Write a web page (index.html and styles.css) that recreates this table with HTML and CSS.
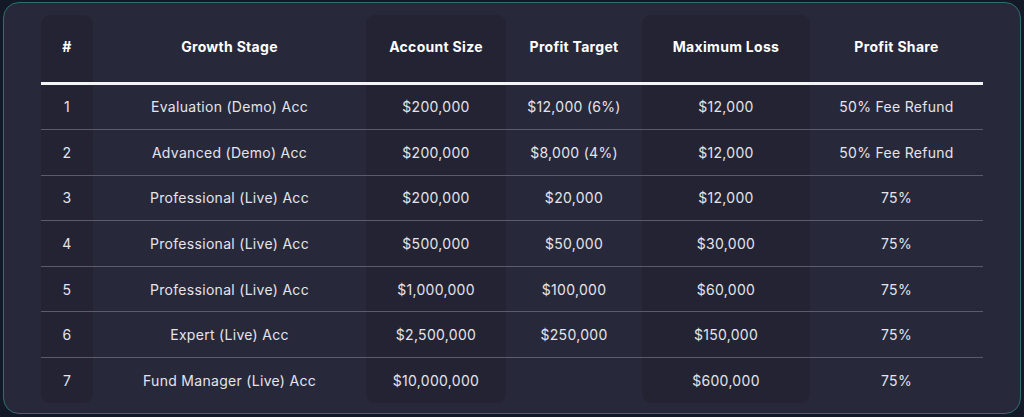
FILE: index.html
```html
<!DOCTYPE html>
<html lang="en">
<head>
<meta charset="utf-8">
<title>Growth Stages</title>
<link rel="stylesheet" href="styles.css">
</head>
<body>
<div class="page">
  <div class="card">
    <table class="plan">
      <colgroup>
        <col class="c1"><col class="c2"><col class="c3"><col class="c4"><col class="c5"><col class="c6">
      </colgroup>
      <thead>
        <tr>
          <th class="dark">#</th>
          <th>Growth Stage</th>
          <th class="dark">Account Size</th>
          <th>Profit Target</th>
          <th class="dark">Maximum Loss</th>
          <th>Profit Share</th>
        </tr>
      </thead>
      <tbody>
        <tr><td class="dark">1</td><td>Evaluation (Demo) Acc</td><td class="dark">$200,000</td><td>$12,000 (6%)</td><td class="dark">$12,000</td><td>50% Fee Refund</td></tr>
        <tr><td class="dark">2</td><td>Advanced (Demo) Acc</td><td class="dark">$200,000</td><td>$8,000 (4%)</td><td class="dark">$12,000</td><td>50% Fee Refund</td></tr>
        <tr><td class="dark">3</td><td>Professional (Live) Acc</td><td class="dark">$200,000</td><td>$20,000</td><td class="dark">$12,000</td><td>75%</td></tr>
        <tr><td class="dark">4</td><td>Professional (Live) Acc</td><td class="dark">$500,000</td><td>$50,000</td><td class="dark">$30,000</td><td>75%</td></tr>
        <tr><td class="dark">5</td><td>Professional (Live) Acc</td><td class="dark">$1,000,000</td><td>$100,000</td><td class="dark">$60,000</td><td>75%</td></tr>
        <tr><td class="dark">6</td><td>Expert (Live) Acc</td><td class="dark">$2,500,000</td><td>$250,000</td><td class="dark">$150,000</td><td>75%</td></tr>
        <tr><td class="dark">7</td><td>Fund Manager (Live) Acc</td><td class="dark">$10,000,000</td><td></td><td class="dark">$600,000</td><td>75%</td></tr>
      </tbody>
    </table>
  </div>
</div>
</body>
</html>
```

FILE: styles.css
```css
html, body {
  margin: 0;
  padding: 0;
  background: #141927;
}
body {
  font-family: Inter, "Liberation Sans", sans-serif;
  color: #e4e4ea;
}
.page {
  width: 1024px;
  height: 417px;
  padding: 2px 3px 3px 3px;
  box-sizing: border-box;
}
.card {
  width: 1018px;
  height: 412px;
  box-sizing: border-box;
  background: #28283b;
  border: 1.5px solid #2f6e6e;
  border-radius: 16px;
  padding-top: 11.5px;
  display: flex;
  justify-content: center;
  align-items: flex-start;
}
.plan {
  width: 942px;
  border-collapse: separate;
  border-spacing: 0;
  table-layout: fixed;
}
.c1 { width: 52px; }
.c2 { width: 273px; }
.c3 { width: 140px; }
.c4 { width: 136px; }
.c5 { width: 168px; }
.c6 { width: 173px; }
.plan th {
  height: 70px;
  box-sizing: border-box;
  padding: 0 0 3px 0;
  font-size: 14px;
  font-weight: 700;
  letter-spacing: 0.3px;
  color: #ffffff;
  text-align: center;
  vertical-align: middle;
  border-bottom: 3px solid #f4f4f6;
}
.plan td {
  height: 45.6px;
  box-sizing: border-box;
  padding: 0;
  font-size: 14px;
  font-weight: 400;
  letter-spacing: 0.3px;
  text-align: center;
  vertical-align: middle;
  border-bottom: 1px solid #5b5b6c;
}
.plan tbody tr:last-child td {
  border-bottom: none;
  height: 45px;
}
.plan .dark {
  background: #232334;
}
.plan th.dark {
  border-top-left-radius: 9px;
  border-top-right-radius: 9px;
}
.plan tbody tr:last-child td.dark {
  border-bottom-left-radius: 9px;
  border-bottom-right-radius: 9px;
}
```
